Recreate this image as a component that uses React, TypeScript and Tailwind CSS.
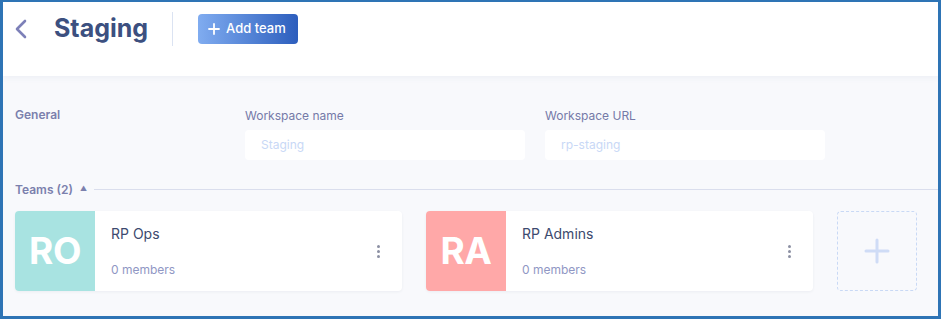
import React from "react";

function Card({ initials, name, bg }: { initials: string; name: string; bg: string }) {
  return (
    <div className="flex h-[80px] w-[387px] rounded-[4px] bg-white shadow-[0_1px_3px_rgba(40,50,90,0.06)]">
      <div className={`flex h-[80px] w-[80px] items-center justify-center rounded-l-[4px] ${bg}`}>
        <span className="text-[37px] font-bold tracking-[-0.5px] text-white">{initials}</span>
      </div>
      <div className="flex flex-1 flex-col justify-between pl-4 pt-[15px] pb-[14px]">
        <div className="text-[14px] leading-[16px] text-[#3c4a6e]">{name}</div>
        <div className="text-[12px] leading-[14px] text-[#9097c4]">0 members</div>
      </div>
      <div className="flex items-center pr-[22px]">
        <div className="flex flex-col gap-[2px]">
          <span className="block h-[3px] w-[3px] rounded-full bg-[#8c90a3]" />
          <span className="block h-[3px] w-[3px] rounded-full bg-[#8c90a3]" />
          <span className="block h-[3px] w-[3px] rounded-full bg-[#8c90a3]" />
        </div>
      </div>
    </div>
  );
}

export default function App() {
  return (
    <div
      className="h-[319px] w-[941px] overflow-hidden border-t-2 border-l-[3px] border-r-[3px] border-b-[3px] border-[#2e74b5] bg-[#f8f9fc]"
      style={{ fontFamily: "Inter, 'Noto Sans', sans-serif" }}
    >
      <div className="relative z-10 flex h-[74px] items-start bg-white shadow-[0_2px_6px_rgba(60,80,130,0.06)]">
        <div className="flex h-[54px] items-center">
          <svg width="18" height="24" viewBox="0 0 18 24" className="ml-[9px]">
            <path d="M13 4 L5 12 L13 20" fill="none" stroke="#7d80b8" strokeWidth="2.6" strokeLinecap="round" strokeLinejoin="round" />
          </svg>
          <h1 className="ml-[24px] text-[25px] font-bold tracking-[0px] text-[#3c5080]">Staging</h1>
          <div className="ml-[24px] h-[34px] w-px bg-[#dbe3f2]" />
          <button className="ml-[25px] flex h-[30px] w-[100px] items-center gap-[6px] rounded-[4px] bg-gradient-to-r from-[#80acf0] to-[#2d5ebd] pl-[10px] text-[13px] font-medium text-white">
            <svg width="12" height="12" viewBox="0 0 12 12">
              <path d="M6 1 V11 M1 6 H11" stroke="white" strokeWidth="1.8" strokeLinecap="round" />
            </svg>
            Add team
          </button>
        </div>
      </div>

      <div className="flex pt-[30px]">
        <div className="w-[242px] pl-[12px] text-[12px] font-semibold text-[#7b80ad]">General</div>
        <div className="flex gap-[20px]">
          <div className="w-[280px]">
            <div className="mt-[1px] text-[12px] text-[#757aa8]">Workspace name</div>
            <div className="mt-[5px] flex h-[30px] items-center rounded-[4px] bg-white pl-4 text-[12px] text-[#c8d8f6]">Staging</div>
          </div>
          <div className="w-[280px]">
            <div className="mt-[1px] text-[12px] text-[#757aa8]">Workspace URL</div>
            <div className="mt-[5px] flex h-[30px] items-center rounded-[4px] bg-white pl-4 text-[12px] text-[#c8d8f6]">rp-staging</div>
          </div>
        </div>
      </div>

      <div className="mt-[20px] flex items-center pl-[12px]">
        <span className="translate-y-[1px] text-[12px] font-semibold text-[#7b80ad]">Teams (2)</span>
        <span className="ml-[7px] text-[7px] text-[#7b80ad]">▲</span>
        <div className="ml-[7px] h-px flex-1 bg-[#dadeed]" />
      </div>

      <div className="mt-[13px] flex gap-[24px] pl-[12px]">
        <Card initials="RO" name="RP Ops" bg="bg-[#a8e3e1]" />
        <Card initials="RA" name="RP Admins" bg="bg-[#ffa8a8]" />
        <div className="flex h-[80px] w-[80px] items-center justify-center rounded-[4px] border border-dashed border-[#c9d9f5]">
          <svg width="26" height="26" viewBox="0 0 26 26">
            <path d="M13 2 V24 M2 13 H24" stroke="#cfdcf6" strokeWidth="3" strokeLinecap="round" />
          </svg>
        </div>
      </div>
    </div>
  );
}
